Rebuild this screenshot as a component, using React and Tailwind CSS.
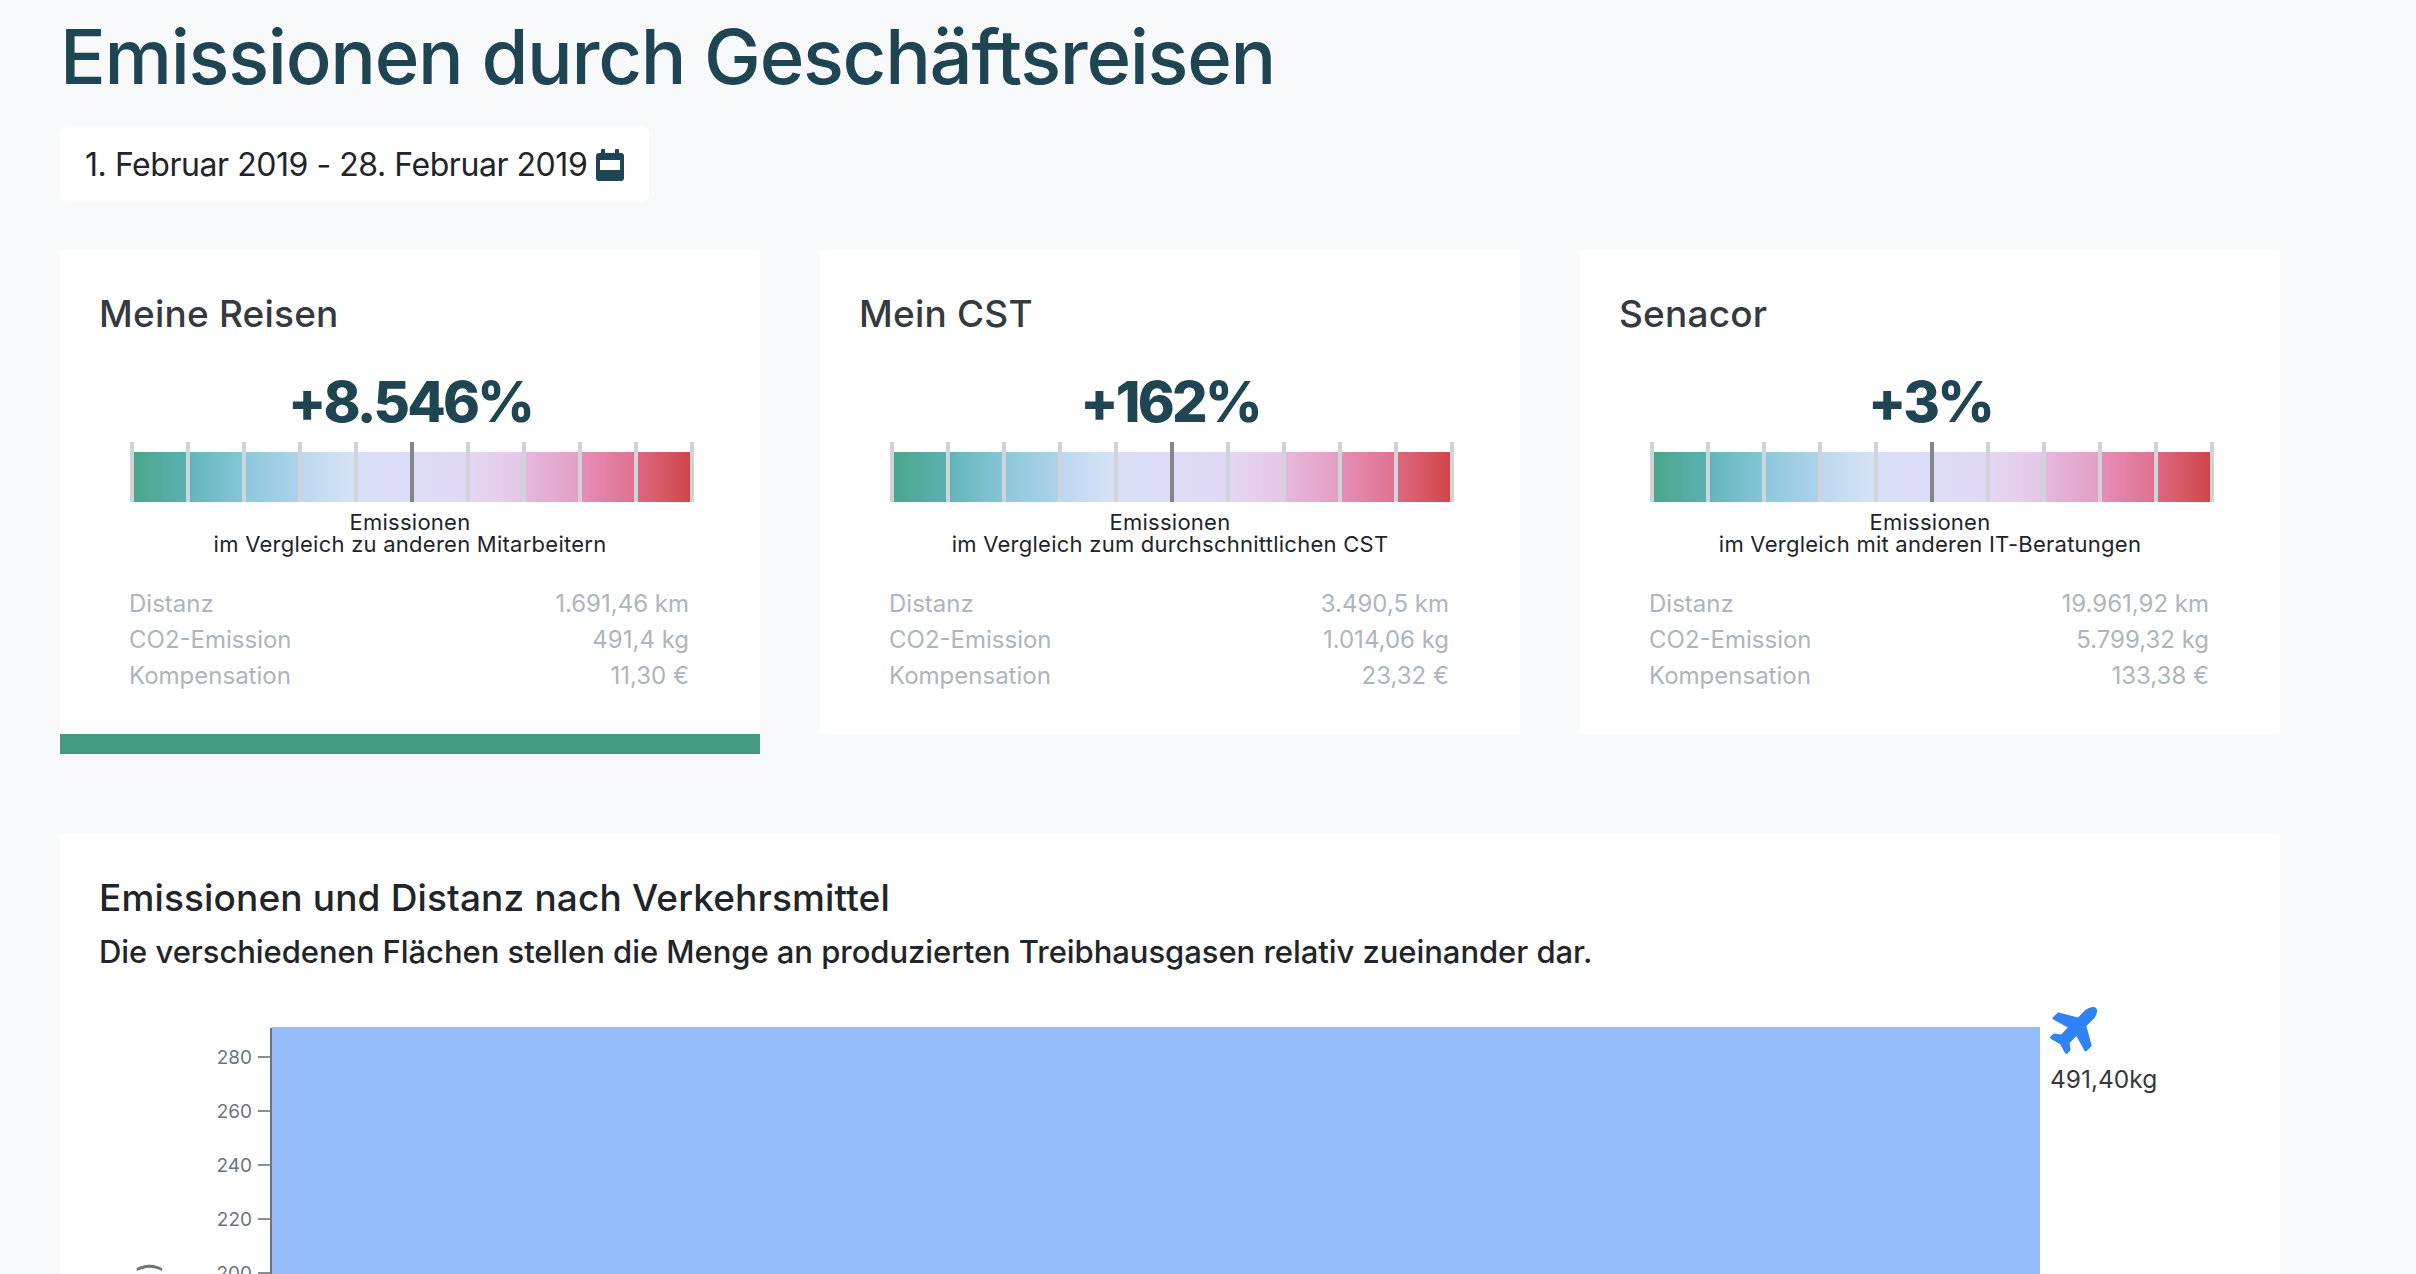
import { FaPlane } from "react-icons/fa";

const segments = [
  "from-[#4aa68b] to-[#5ab2b0]",
  "from-[#62b6bc] to-[#85c5d6]",
  "from-[#8ec8dc] to-[#aed2ea]",
  "from-[#bcd8f0] to-[#d8e3f5]",
  "from-[#dadff7] to-[#dcdcf8]",
  "from-[#dddcf7] to-[#e0d8f4]",
  "from-[#e4d7f3] to-[#e6c6e6]",
  "from-[#e6b8dc] to-[#e29fc4]",
  "from-[#e48eb4] to-[#e07290]",
  "from-[#de6780] to-[#cf4649]",
];

const cards = [
  {
    title: "Meine Reisen",
    percent: "+8.546%",
    compare: "im Vergleich zu anderen Mitarbeitern",
    distance: "1.691,46 km",
    co2: "491,4 kg",
    comp: "11,30 €",
    active: true,
  },
  {
    title: "Mein CST",
    percent: "+162%",
    compare: "im Vergleich zum durchschnittlichen CST",
    distance: "3.490,5 km",
    co2: "1.014,06 kg",
    comp: "23,32 €",
  },
  {
    title: "Senacor",
    percent: "+3%",
    compare: "im Vergleich mit anderen IT-Beratungen",
    distance: "19.961,92 km",
    co2: "5.799,32 kg",
    comp: "133,38 €",
  },
];

const yTicks = [
  { label: "280", y: 50 },
  { label: "260", y: 104 },
  { label: "240", y: 158 },
  { label: "220", y: 212 },
  { label: "200", y: 266 },
];

function CalendarIcon() {
  return (
    <svg viewBox="0 0 28 32" className="h-[32px] w-[28px] fill-[#1f4452]">
      <rect x="5" y="0" width="4" height="6" rx="1" />
      <rect x="19" y="0" width="4" height="6" rx="1" />
      <path d="M0 7a3 3 0 0 1 3-3h22a3 3 0 0 1 3 3v4H0zM0 21h28v8a3 3 0 0 1-3 3H3a3 3 0 0 1-3-3z" />
      <path d="M0 11h4v10H0zM24 11h4v10h-4z" />
    </svg>
  );
}

function Scale() {
  return (
    <div className="mt-[6px] ml-[70px] flex h-[60px] w-[564px] items-end">
      {segments.map((seg, i) => (
        <div key={seg} className="flex h-full flex-1 items-end">
          <div className={`h-full w-1 ${i === 5 ? "bg-[#868686]" : "bg-[#ced4da]"}`} />
          <div className={`h-[50px] flex-1 bg-linear-to-r ${seg}`} />
        </div>
      ))}
      <div className="h-full w-1 bg-[#ced4da]" />
    </div>
  );
}

function Stat({ label, value }) {
  return (
    <div className="flex justify-between">
      <span>{label}</span>
      <span>{value}</span>
    </div>
  );
}

function Card({ card }) {
  return (
    <div className={`h-fit w-[700px] bg-white ${card.active ? "border-b-[20px] border-[#459b80]" : ""}`}>
      <div className="h-[484px] pt-[40px]">
        <h3 className="pl-[39px] text-[37px] leading-[48px] font-medium tracking-[0.2px] text-[#343a40]">{card.title}</h3>
        <div className="mt-[31px] text-center text-[56px] leading-[67px] font-extrabold tracking-[-2.8px] text-[#1f4452]">
          {card.percent}
        </div>
        <Scale />
        <div className="mt-[9px] text-center text-[22px] leading-[22px] tracking-[0.25px] text-[#212529]">
          <div>Emissionen</div>
          <div>{card.compare}</div>
        </div>
        <div className="mt-[31px] ml-[69px] w-[560px] text-[24px] leading-[36px] text-[#adb5bd]">
          <Stat label="Distanz" value={card.distance} />
          <Stat label="CO2-Emission" value={card.co2} />
          <Stat label="Kompensation" value={card.comp} />
        </div>
      </div>
    </div>
  );
}

function Chart() {
  return (
    <div className="mt-[20px] flex items-start">
      <svg width="1941" height="400" className="mt-[11px] shrink-0">
        <rect x="173" y="20" width="1768" height="380" fill="#96bdfb" />
        <rect x="171" y="21" width="2" height="379" fill="#6c757d" />
        {yTicks.map((t) => (
          <g key={t.label}>
            <rect x="159" y={t.y - 1} width="12" height="2" fill="#868e96" />
            <text x="153" y={t.y + 7} textAnchor="end" fontSize="19" fill="#6c757d">
              {t.label}
            </text>
          </g>
        ))}
        <text
          transform="translate(59 255) rotate(-90)"
          textAnchor="end"
          fontSize="28"
          fontWeight="500"
          fill="#6c757d"
        >
          Emissionen (kg)
        </text>
      </svg>
      <div className="ml-[10px] pt-[7px]">
        <FaPlane className="h-[48px] w-[54px] -rotate-45 text-[#3082f7]" />
        <div className="mt-[10px] text-[24.5px] leading-[36px] text-[#343a40]">491,40kg</div>
      </div>
    </div>
  );
}

export default function App() {
  return (
    <div className="h-[1274px] overflow-hidden bg-[#f8f9fa] pl-[60px] font-['Inter',sans-serif]">
      <h1 className="pt-[10px] text-[76px] leading-[92px] font-[550] tracking-[-1.3px] text-[#1f4452]">
        Emissionen durch Geschäftsreisen
      </h1>
      <div className="mt-[24px] flex h-[76px] w-fit items-center gap-[9px] rounded-lg bg-white px-[25px] pt-[2px] text-[32px] tracking-[-0.45px] text-[#212529]">
        1. Februar 2019 - 28. Februar 2019
        <CalendarIcon />
      </div>
      <div className="mt-[48px] flex items-start gap-[60px]">
        {cards.map((card) => (
          <Card key={card.title} card={card} />
        ))}
      </div>
      <div className="mt-[80px] w-[2220px] bg-white px-[39px] pt-[40px] pb-[40px]">
        <h4 className="text-[37px] leading-[48px] font-medium tracking-[0.15px] text-[#212529]">
          Emissionen und Distanz nach Verkehrsmittel
        </h4>
        <div className="mt-[6px] text-[31px] leading-[48px] font-medium tracking-[-0.05px] text-[#212529]">
          Die verschiedenen Flächen stellen die Menge an produzierten Treibhausgasen relativ zueinander dar.
        </div>
        <Chart />
      </div>
    </div>
  );
}
